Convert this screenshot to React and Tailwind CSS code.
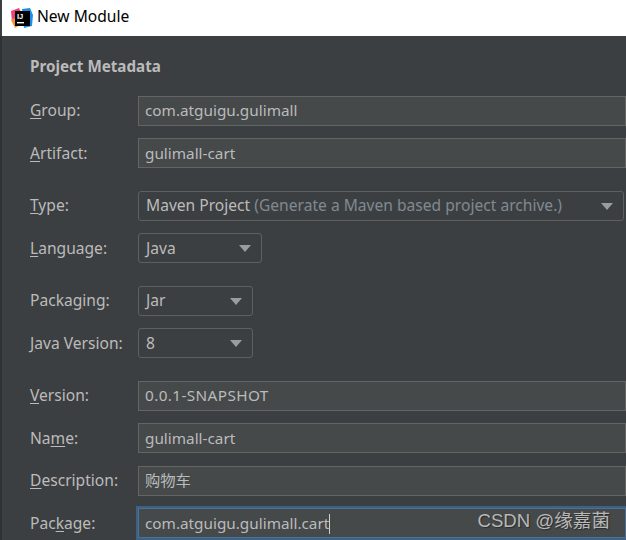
import React from "react";

function Label({ pre = "", u, post = "", low }) {
	return (
		<div className={`w-[136px] shrink-0 pl-[28px] text-[15.6px] text-[#bbbbbb] ${low ? "pt-px" : "pb-px"}`}>
			{pre}<span className="underline underline-offset-2">{u}</span>{post}
		</div>
	);
}

function Field({ value, focused, low, className = "" }) {
	if (focused) {
		return (
			<div className="flex h-[30px] w-[520px] items-center border border-[#4a7096] bg-[#45494a] pt-px pl-[6px] text-[15.3px] text-[#bbbbbb] outline-2 outline-[#3d6185]">
				{value}
				<span className="h-[20px] w-px bg-[#cfcfcf]"></span>
			</div>
		);
	}
	return (
		<div className={`flex h-[30px] w-[520px] items-center border border-[#646464] bg-[#45494a] pl-[6px] text-[15.3px] text-[#bbbbbb] ${low ? "pt-px" : "pb-px"} ${className}`}>
			{value}
		</div>
	);
}

function Select({ value, hint, width, low }) {
	return (
		<div className={`flex h-[30px] items-center justify-between rounded-[3px] border border-[#5e6060] bg-[#3c3f41] pl-[7px] pr-[10px] text-[15.6px] text-[#bbbbbb] ${width}`}>
			<span className={low ? "pt-px" : "pb-px"}>
				{value}
				{hint && <span className="text-[#808a92]"> {hint}</span>}
			</span>
			<svg width="12" height="7" viewBox="0 0 12 7"><path d="M0 0h12L6 7z" fill="#9a9d9f" /></svg>
		</div>
	);
}

function Logo() {
	return (
		<svg width="24" height="24" viewBox="0 0 24 24" className="shrink-0">
			<path d="M1 5l8-3 3 6-3 6-7 2z" fill="#f0417a" />
			<path d="M1 14l6-3 3 8-5 3z" fill="#f59331" />
			<path d="M12 3l8-1 3 7-1 11-8 2z" fill="#1d8fe8" />
			<rect x="5" y="5" width="15" height="15" fill="#000" />
			<text x="7" y="13" fontSize="7.5" fontWeight="700" fill="#fff" fontFamily="'Liberation Sans', sans-serif">IJ</text>
			<rect x="7" y="16" width="7" height="1.4" fill="#fff" />
		</svg>
	);
}

function App() {
	return (
		<div className="h-[540px] w-[626px] overflow-hidden bg-[#3c3f41] font-['Noto_Sans','Noto_Sans_CJK_SC',sans-serif]">
			<div className="ml-[2px] flex h-[36px] items-center gap-[3px] bg-white pl-[8px] text-[15.6px] text-black">
				<Logo />
				<span className="pb-[3px]">New Module</span>
			</div>
			<div className="relative h-[504px] border-l-2 border-[#2f3133]">
				<div className="pt-[19px] pb-px pl-[28px] text-[15.2px] font-bold leading-[22px] text-[#bbbbbb]">Project Metadata</div>

				<div className="mt-[18px] flex items-center">
					<Label u="G" post="roup:" />
					<Field value="com.atguigu.gulimall" />
				</div>
				<div className="mt-[12px] flex items-center">
					<Label u="A" post="rtifact:" low />
					<Field value="gulimall-cart" low />
				</div>

				<div className="mt-[23px] flex items-center">
					<Label u="T" post="ype:" />
					<Select value="Maven Project" hint="(Generate a Maven based project archive.)" width="w-[486px]" />
				</div>
				<div className="mt-[12px] flex items-center">
					<Label u="L" post="anguage:" low />
					<Select value="Java" width="w-[124px]" low />
				</div>

				<div className="mt-[23px] flex items-center">
					<Label pre="Packa" u="g" post="ing:" />
					<Select value="Jar" width="w-[115px]" />
				</div>
				<div className="mt-[12px] flex items-center">
					<Label u="J" post="ava Version:" low />
					<Select value="8" width="w-[115px]" low />
				</div>

				<div className="mt-[23px] flex items-center">
					<Label u="V" post="ersion:" />
					<Field value="0.0.1-SNAPSHOT" className="tracking-[0.4px]" />
				</div>
				<div className="mt-[12px] flex items-center">
					<Label pre="Na" u="m" post="e:" low />
					<Field value="gulimall-cart" low />
				</div>
				<div className="mt-[13px] flex items-center">
					<Label u="D" post="escription:" />
					<Field value="购物车" />
				</div>
				<div className="mt-[12px] flex items-center">
					<Label pre="Pac" u="k" post="age:" low />
					<Field value="com.atguigu.gulimall.cart" focused />
				</div>

				{/* csdn watermark over the last field */}
				<div className="absolute right-[16px] bottom-[7px] font-['Liberation_Sans','Noto_Sans_CJK_SC',sans-serif] text-[18.6px] leading-[24px] text-[#b8b8b8] [text-shadow:1px_1px_1px_#2b2b2b]">CSDN @缘嘉菌</div>
			</div>
		</div>
	);
}

export default App;
